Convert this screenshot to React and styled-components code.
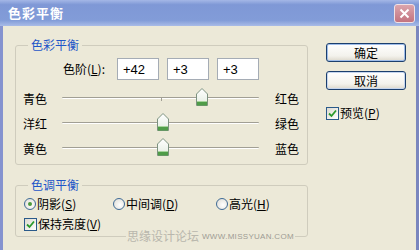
import React from "react";
import styled, { createGlobalStyle } from "styled-components";

const GlobalStyle = createGlobalStyle`
  html, body {
    margin: 0;
    padding: 0;
    background: #ece9d8;
  }
  body {
    font-family: "Noto Sans CJK SC", "Liberation Sans", sans-serif;
    font-size: 12px;
    color: #000;
  }
`;

const Window = styled.div`
  width: 419px;
  height: 250px;
  display: flex;
  flex-direction: column;
  background: #ece9d8;
  overflow: hidden;
`;

const TitleBar = styled.div`
  height: 26px;
  flex: none;
  box-sizing: border-box;
  display: flex;
  align-items: center;
  justify-content: space-between;
  padding: 0 4px 0 8px;
  background: linear-gradient(180deg, #a4b7e6 0%, #7f98d6 18%, #829cd8 78%, #a9bce7 100%);
`;

const Title = styled.span`
  color: #fff;
  font-weight: bold;
  font-size: 13px;
  letter-spacing: 1px;
  line-height: 16px;
`;

const CloseButton = styled.div`
  width: 21px;
  height: 19px;
  box-sizing: border-box;
  border: 1px solid #f1e1e5;
  border-radius: 3px;
  background: linear-gradient(180deg, #dba5ad, #c3737f);
  display: flex;
  align-items: center;
  justify-content: center;
`;

const Body = styled.div`
  flex: 1;
  display: flex;
  align-items: flex-start;
  border-left: 3px solid #8593cf;
  border-right: 3px solid #7a86be;
`;

const LeftColumn = styled.div`
  width: 293px;
  padding: 11px 0 0 12px;
  display: flex;
  flex-direction: column;
  gap: 12px;
`;

const RightColumn = styled.div`
  width: 80px;
  padding: 17px 0 0 18px;
  display: flex;
  flex-direction: column;
`;

const Group = styled.fieldset`
  position: relative;
  margin: 0;
  padding: 0;
  min-width: 0;
  border: 1px solid #cfccbd;
  border-radius: 3px;
`;

const Legend = styled.legend`
  margin-left: 12px;
  padding: 0 3px;
  color: #1f56c8;
  font-size: 12px;
  line-height: 16px;
`;

const GroupContent = styled.div`
  padding: ${(p) => p.$pad};
  display: flex;
  flex-direction: column;
  gap: ${(p) => p.$gap || 0}px;
`;

const LevelRow = styled.div`
  display: flex;
  align-items: center;
  gap: 8px;
  padding-left: 40px;
  height: 22px;
`;

const LevelLabel = styled.span`
  width: 46px;
  line-height: 16px;
  white-space: nowrap;
`;

const LevelInput = styled.div`
  width: 42px;
  height: 22px;
  box-sizing: border-box;
  border: 1px solid #a5acb5;
  background: #fff;
  padding-left: 5px;
  display: flex;
  align-items: center;
  font-family: "Liberation Sans", sans-serif;
  font-size: 13px;
`;

const SliderRow = styled.div`
  display: grid;
  grid-template-columns: 39px 197px auto;
  align-items: center;
  height: 25px;
  margin-top: ${(p) => p.$first ? 5 : 0}px;
`;

const SideLabel = styled.span`
  padding-left: ${(p) => (p.$right ? 16 : 0)}px;
  line-height: 16px;
  margin-top: 3px;
  white-space: nowrap;
`;

const Track = styled.div`
  position: relative;
  height: 25px;
  display: flex;
  align-items: center;
`;

const Groove = styled.div`
  width: 100%;
  height: 1px;
  background: #a19f94;
  border-bottom: 1px solid #fff;
  border-radius: 1px;
`;

const Tick = styled.div`
  position: absolute;
  left: 50%;
  top: 12px;
  width: 1px;
  height: 4px;
  background: #a19f94;
`;

const Thumb = styled.div`
  position: absolute;
  top: 3px;
  width: 12px;
  height: 18px;
  margin-left: -6px;
`;

const Underline = styled.span`
  text-decoration: underline;
  text-underline-offset: 1px;
`;

const OptionRow = styled.div`
  display: flex;
  align-items: center;
  height: 16px;
`;

const RadioItem = styled.div`
  width: ${(p) => (p.$w ? `${p.$w}px` : "auto")};
  display: flex;
  align-items: center;
  gap: 1px;
  white-space: nowrap;
  line-height: 16px;
`;

const RadioCircle = styled.span`
  width: 12px;
  height: 12px;
  box-sizing: border-box;
  border: 1px solid #3e6a95;
  border-radius: 50%;
  background: radial-gradient(circle at 60% 60%, #fff 0%, #dcdad2 100%);
  display: flex;
  align-items: center;
  justify-content: center;
  &::after {
    content: "";
    display: ${(p) => (p.$checked ? "block" : "none")};
    width: 4px;
    height: 4px;
    border-radius: 50%;
    background: #4c9a3c;
  }
`;

const CheckItem = styled.div`
  display: flex;
  align-items: center;
  gap: 1px;
  white-space: nowrap;
  line-height: 16px;
`;

const CheckBox = styled.span`
  width: 13px;
  height: 13px;
  box-sizing: border-box;
  border: 1px solid #2a5a8a;
  background: linear-gradient(135deg, #dcdad0, #fff);
  display: flex;
  align-items: center;
  justify-content: center;
`;

const Watermark = styled.div`
  position: absolute;
  left: 110px;
  bottom: -7px;
  height: 14px;
  display: flex;
  align-items: center;
  gap: 3px;
  padding: 0 1px;
  background: #ece9d8;
  white-space: nowrap;
`;

const WatermarkCn = styled.span`
  color: #b9b7ad;
  font-size: 12px;
  line-height: 14px;
`;

const WatermarkEn = styled.span`
  color: #9e9c94;
  font-family: "Liberation Sans", sans-serif;
  font-size: 8px;
  letter-spacing: 0.3px;
`;

const Button = styled.div`
  width: 80px;
  height: 19px;
  box-sizing: border-box;
  margin-bottom: ${(p) => p.$mb}px;
  border: 1px solid #1b3f6e;
  border-radius: 3px;
  background: linear-gradient(180deg, #ffffff 0%, #f3f2ec 70%, #dcd8cc 100%);
  box-shadow: inset 0 0 0 1px ${(p) => (p.$default ? "#9fbde9" : "#c6d6ee")};
  display: flex;
  align-items: center;
  justify-content: center;
  line-height: 16px;
`;

const CheckMark = () => (
  <svg width="9" height="9" viewBox="0 0 9 9">
    <path d="M1 4.5 L3.5 7 L8 1.5" fill="none" stroke="#2b9a2b" strokeWidth="1.8" />
  </svg>
);

const ThumbIcon = () => (
  <svg width="12" height="18" viewBox="0 0 12 18">
    <defs>
      <linearGradient id="thumbFill" x1="0" y1="0" x2="0" y2="1">
        <stop offset="0" stopColor="#ffffff" />
        <stop offset="1" stopColor="#e3ece0" />
      </linearGradient>
    </defs>
    <path d="M0.5 6 L6 0.5 L11.5 6 L11.5 17.5 L0.5 17.5 Z" fill="url(#thumbFill)" stroke="#7d9280" />
    <rect x="1" y="14" width="10" height="3.5" fill="#4f9c48" />
    <line x1="1" y1="13.5" x2="11" y2="13.5" stroke="#a6d49c" />
  </svg>
);

const Slider = ({ left, right, value, tick, first }) => (
  <SliderRow $first={first}>
    <SideLabel>{left}</SideLabel>
    <Track>
      <Groove />
      {tick && <Tick />}
      <Thumb style={{ left: `${(value + 100) / 2}%` }}>
        <ThumbIcon />
      </Thumb>
    </Track>
    <SideLabel $right>{right}</SideLabel>
  </SliderRow>
);

const levels = ["+42", "+3", "+3"];

const sliders = [
  { left: "青色", right: "红色", value: 42, tick: true },
  { left: "洋红", right: "绿色", value: 3 },
  { left: "黄色", right: "蓝色", value: 3 },
];

const App = () => (
  <>
    <GlobalStyle />
    <Window>
      <TitleBar>
        <Title>色彩平衡</Title>
        <CloseButton>
          <svg width="11" height="11" viewBox="0 0 11 11">
            <path d="M1.5 1.5 L9.5 9.5 M9.5 1.5 L1.5 9.5" stroke="#fff" strokeWidth="2" />
          </svg>
        </CloseButton>
      </TitleBar>
      <Body>
        <LeftColumn>
          <Group>
            <Legend>色彩平衡</Legend>
            <GroupContent $pad="5px 0 4px 7px">
              <LevelRow>
                <LevelLabel>
                  色阶(<Underline>L</Underline>):
                </LevelLabel>
                {levels.map((v, i) => (
                  <LevelInput key={i}>{v}</LevelInput>
                ))}
              </LevelRow>
              {sliders.map((s, i) => (
                <Slider key={s.left} first={i === 0} {...s} />
              ))}
            </GroupContent>
          </Group>
          <Group>
            <Legend>色调平衡</Legend>
            <GroupContent $pad="3px 0 4px 8px" $gap={4}>
              <OptionRow>
                <RadioItem $w={89}>
                  <RadioCircle $checked />
                  <span>
                    阴影(<Underline>S</Underline>)
                  </span>
                </RadioItem>
                <RadioItem $w={103}>
                  <RadioCircle />
                  <span>
                    中间调(<Underline>D</Underline>)
                  </span>
                </RadioItem>
                <RadioItem>
                  <RadioCircle />
                  <span>
                    高光(<Underline>H</Underline>)
                  </span>
                </RadioItem>
              </OptionRow>
              <OptionRow>
                <CheckItem>
                  <CheckBox>
                    <CheckMark />
                  </CheckBox>
                  <span>
                    保持亮度(<Underline>V</Underline>)
                  </span>
                </CheckItem>
              </OptionRow>
            </GroupContent>
            <Watermark>
              <WatermarkCn>思缘设计论坛</WatermarkCn>
              <WatermarkEn>WWW.MISSYUAN.COM</WatermarkEn>
            </Watermark>
          </Group>
        </LeftColumn>
        <RightColumn>
          <Button $default $mb={9}>确定</Button>
          <Button $mb={15}>取消</Button>
          <CheckItem>
            <CheckBox>
              <CheckMark />
            </CheckBox>
            <span>
              预览(<Underline>P</Underline>)
            </span>
          </CheckItem>
        </RightColumn>
      </Body>
    </Window>
  </>
);

export default App;
